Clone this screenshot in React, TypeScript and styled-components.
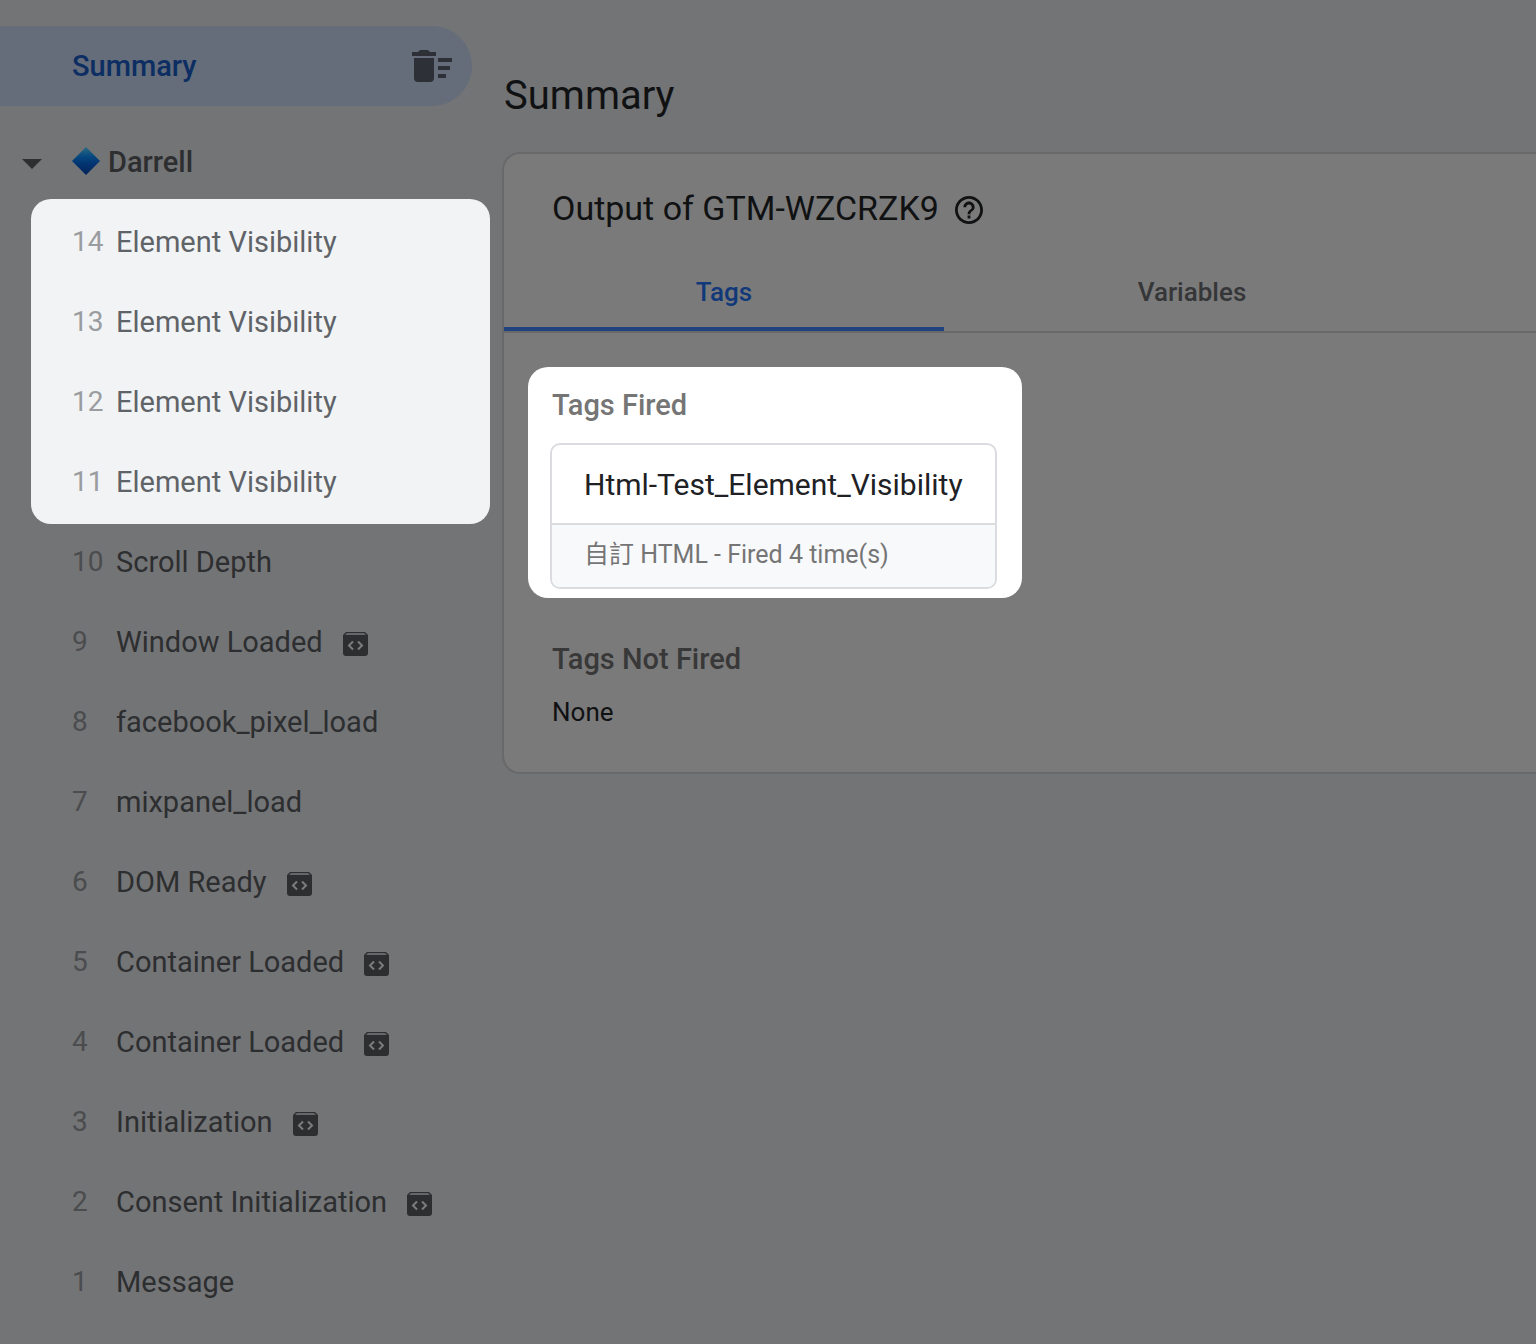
import React, { useState } from "react";
import styled, { createGlobalStyle, css } from "styled-components";

const sans = `Roboto, "Noto Sans CJK TC", sans-serif`;

const GlobalStyle = createGlobalStyle`
  *, *::before, *::after { box-sizing: border-box; }
  body {
    margin: 0;
    background: #737476;
    font-family: ${sans};
    overflow-x: hidden;
  }
  button { font: inherit; color: inherit; background: none; border: 0; padding: 0; cursor: pointer; }
  h1, h2, h3, p, ol { margin: 0; padding: 0; font-weight: 400; }
  svg { display: block; flex: none; }
`;

const Page = styled.div`
  display: flex;
  align-items: flex-start;
  gap: 12px;
  min-height: 100vh;
  padding-top: 26px;
`;

const Sidebar = styled.nav`
  flex: 0 0 490px;
  font-size: 29px;
  line-height: 40px;
  color: #2d2e30;
`;

const SummaryItem = styled.div`
  display: flex;
  align-items: center;
  justify-content: space-between;
  height: 80px;
  margin: 0 18px 16px 0;
  padding: 0 20px 0 72px;
  border-radius: 0 40px 40px 0;
  background: #656c7a;
`;

const SummaryLink = styled.button`
  font-weight: 500;
  color: #0c2e62;
`;

const ClearButton = styled.button`
  color: #2d3037;
`;

const ContainerRow = styled.button`
  display: flex;
  align-items: center;
  width: 100%;
  height: 80px;
  padding-left: 22px;
  font-weight: 500;
`;

const Caret = styled.span`
  margin-top: 4px;
`;

const Gem = styled.span`
  margin: 0 8px 2px 30px;
`;

const EventList = styled.ol<{ $spotlit?: boolean }>`
  list-style: none;
  ${(p) =>
    p.$spotlit
      ? css`
          margin: -3px 0 -2px 31px;
          padding: 3px 0 2px 41px;
          border-radius: 20px;
          background: #f1f3f5;
          color: #5f6368;
          --number: #9a9c9f;
        `
      : css`
          padding-left: 72px;
          --number: #4b4c4e;
        `}
`;

const EventButton = styled.button`
  display: flex;
  align-items: center;
  width: 100%;
  height: 80px;
  text-align: left;
  white-space: nowrap;
`;

const EventNumber = styled.span`
  width: 44px;
  font-size: 28px;
  color: var(--number);
`;

const CodeMark = styled.span`
  margin: 4px 0 0 20px;
`;

const Main = styled.main`
  flex: 1;
  min-width: 0;
  padding-top: 46px;
  color: #101112;
`;

const PageTitle = styled.h1`
  padding-left: 2px;
  font-size: 40px;
  line-height: 48px;
`;

const Card = styled.section`
  margin-top: 32px;
  border: 2px solid #68696b;
  border-right: 0;
  border-radius: 18px 0 0 18px;
  background: #7a7a7a;
`;

const CardHeader = styled.header`
  display: flex;
  align-items: center;
  gap: 16px;
  padding: 34px 48px 0;
`;

const CardTitle = styled.h2`
  font-size: 34px;
  line-height: 40px;
`;

const HelpButton = styled.button`
  margin-top: 4px;
`;

const Tabs = styled.div`
  display: grid;
  grid-template-columns: 440px 496px;
  margin-top: 24px;
  border-bottom: 2px solid #68696b;
`;

const Tab = styled.button<{ $active: boolean }>`
  height: 79px;
  padding-top: 4px;
  border-bottom: 4px solid ${(p) => (p.$active ? "#20437f" : "transparent")};
  font-size: 26px;
  font-weight: 500;
  line-height: 32px;
  color: ${(p) => (p.$active ? "#11397a" : "#353638")};
`;

const Panel = styled.div`
  padding: 34px 24px 44px;
`;

const Spotlight = styled.section`
  width: fit-content;
  padding: 18px 25px 9px 22px;
  border-radius: 20px;
  background: #fff;
`;

const GroupTitle = styled.h3<{ $dim?: boolean }>`
  padding-left: 2px;
  font-size: 29px;
  font-weight: 500;
  line-height: 40px;
  color: ${(p) => (p.$dim ? "#383838" : "#757575")};
`;

const TagCard = styled.button`
  display: block;
  margin-top: 18px;
  border: 2px solid #dadce0;
  border-radius: 10px;
  overflow: hidden;
  text-align: left;
  background: #fff;
`;

const TagName = styled.span`
  display: block;
  padding: 20px 32px 18px;
  font-size: 30px;
  line-height: 40px;
  color: #202124;
`;

const TagMeta = styled.span`
  display: block;
  padding: 14px 32px 16px;
  border-top: 2px solid #dadce0;
  background: #f8f9fb;
  font-size: 25px;
  line-height: 32px;
  color: #757575;
`;

const NotFired = styled.section`
  padding: 41px 22px 0;
`;

const Empty = styled.p`
  padding: 17px 2px 0;
  font-size: 26px;
  line-height: 32px;
`;

const CaretIcon = () => (
  <svg width="20" height="10" viewBox="0 0 20 10" aria-hidden="true">
    <path d="M0 0h20L10 10z" fill="currentColor" />
  </svg>
);

const GemIcon = () => (
  <svg width="28" height="28" viewBox="0 0 28 28" aria-hidden="true">
    <defs>
      <linearGradient id="gem" x1="0" y1="0" x2="0" y2="1">
        <stop offset="0" stopColor="#2a6b83" />
        <stop offset=".35" stopColor="#05477f" />
        <stop offset=".6" stopColor="#023472" />
        <stop offset="1" stopColor="#022358" />
      </linearGradient>
    </defs>
    <path d="M14 0 28 14 14 28 0 14z" fill="url(#gem)" />
  </svg>
);

const SweepIcon = () => (
  <svg width="40" height="32" viewBox="0 0 40 32" fill="currentColor" aria-hidden="true">
    <path d="M0 2h6l2-2h8l2 2h6v4H0zM2 8h20v20a4 4 0 0 1-4 4H6a4 4 0 0 1-4-4zM26 8h14v4H26zM26 16h12v4H26zM26 24h8v4h-8z" />
  </svg>
);

const CodeIcon = () => (
  <svg width="25" height="24" viewBox="0 0 25 24" aria-hidden="true">
    <path d="M3 0h19l3 3v18a3 3 0 0 1-3 3H3a3 3 0 0 1-3-3V3z" fill="currentColor" />
    <path d="M4 1h17l2 2H2z" fill="#66676a" />
    <path
      d="M10 9.500 6 13.500l4 4M15 9.500l4 4-4 4"
      fill="none"
      stroke="#7b7c7e"
      strokeWidth="2"
    />
  </svg>
);

const HelpIcon = () => (
  <svg width="28" height="28" viewBox="2 2 20 20" fill="currentColor" aria-hidden="true">
    <path d="M11 18h2v-2h-2v2zm1-16C6.480 2 2 6.480 2 12s4.480 10 10 10 10-4.480 10-10S17.520 2 12 2zm0 18c-4.410 0-8-3.590-8-8s3.590-8 8-8 8 3.590 8 8-3.590 8-8 8zm0-14c-2.210 0-4 1.790-4 4h2c0-1.100.9-2 2-2s2 .9 2 2c0 2-3 1.750-3 5h2c0-2.250 3-2.500 3-5 0-2.210-1.790-4-4-4z" />
  </svg>
);

type PageEvent = { id: number; name: string; code?: boolean };

const visibilityEvents: PageEvent[] = [14, 13, 12, 11].map((id) => ({ id, name: "Element Visibility" }));

const earlierEvents: PageEvent[] = [
  { id: 10, name: "Scroll Depth" },
  { id: 9, name: "Window Loaded", code: true },
  { id: 8, name: "facebook_pixel_load" },
  { id: 7, name: "mixpanel_load" },
  { id: 6, name: "DOM Ready", code: true },
  { id: 5, name: "Container Loaded", code: true },
  { id: 4, name: "Container Loaded", code: true },
  { id: 3, name: "Initialization", code: true },
  { id: 2, name: "Consent Initialization", code: true },
  { id: 1, name: "Message" },
];

const Events = ({ items, spotlit }: { items: PageEvent[]; spotlit?: boolean }) => (
  <EventList $spotlit={spotlit}>
    {items.map((e) => (
      <li key={e.id}>
        <EventButton type="button">
          <EventNumber>{e.id}</EventNumber>
          {e.name}
          {e.code && (
            <CodeMark>
              <CodeIcon />
            </CodeMark>
          )}
        </EventButton>
      </li>
    ))}
  </EventList>
);

export default function App() {
  const [tab, setTab] = useState("Tags");
  return (
    <>
      <GlobalStyle />
      <Page>
        <Sidebar>
          <SummaryItem>
            <SummaryLink type="button">Summary</SummaryLink>
            <ClearButton type="button" aria-label="Clear events">
              <SweepIcon />
            </ClearButton>
          </SummaryItem>
          <ContainerRow type="button" aria-expanded="true">
            <Caret>
              <CaretIcon />
            </Caret>
            <Gem>
              <GemIcon />
            </Gem>
            Darrell
          </ContainerRow>
          <Events items={visibilityEvents} spotlit />
          <Events items={earlierEvents} />
        </Sidebar>
        <Main>
          <PageTitle>Summary</PageTitle>
          <Card>
            <CardHeader>
              <CardTitle>Output of GTM-WZCRZK9</CardTitle>
              <HelpButton type="button" aria-label="Help">
                <HelpIcon />
              </HelpButton>
            </CardHeader>
            <Tabs role="tablist">
              {["Tags", "Variables"].map((name) => (
                <Tab
                  key={name}
                  type="button"
                  role="tab"
                  aria-selected={tab === name}
                  $active={tab === name}
                  onClick={() => setTab(name)}
                >
                  {name}
                </Tab>
              ))}
            </Tabs>
            <Panel role="tabpanel">
              <Spotlight>
                <GroupTitle>Tags Fired</GroupTitle>
                <TagCard type="button">
                  <TagName>Html-Test_Element_Visibility</TagName>
                  <TagMeta>自訂 HTML - Fired 4 time(s)</TagMeta>
                </TagCard>
              </Spotlight>
              <NotFired>
                <GroupTitle $dim>Tags Not Fired</GroupTitle>
                <Empty>None</Empty>
              </NotFired>
            </Panel>
          </Card>
        </Main>
      </Page>
    </>
  );
}
